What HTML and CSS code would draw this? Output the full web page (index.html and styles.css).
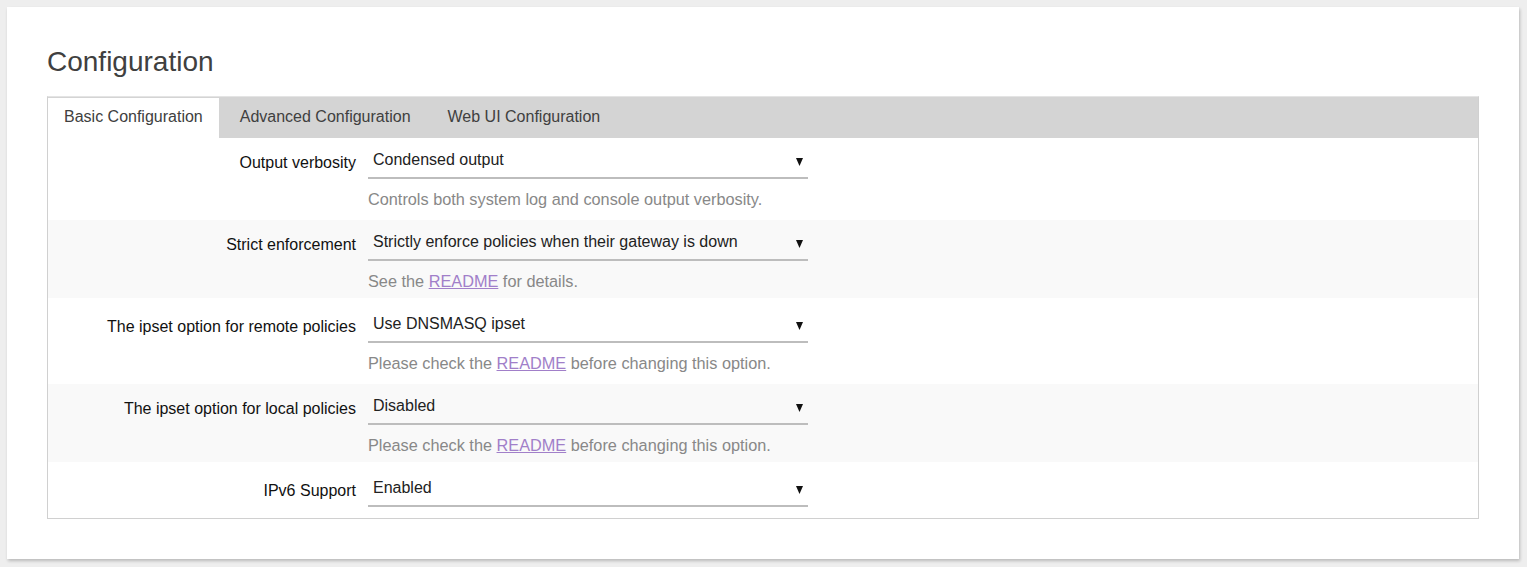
FILE: index.html
```html
<!DOCTYPE html>
<html lang="en">
<head>
<meta charset="utf-8">
<title>Configuration</title>
<link rel="stylesheet" href="styles.css">
</head>
<body>
<div class="page">
  <div class="card">
    <h2 class="title">Configuration</h2>
    <div class="section">
      <ul class="tabs">
        <li class="tab active">Basic Configuration</li>
        <li class="tab">Advanced Configuration</li>
        <li class="tab">Web UI Configuration</li>
      </ul>
      <div class="rows">
        <div class="row">
          <label class="label">Output verbosity</label>
          <div class="field">
            <div class="select"><span>Condensed output</span><svg class="arrow" width="7" height="8" viewBox="0 0 7 8"><polygon points="0,0 7,0 3.5,8" fill="#111"/></svg></div>
            <div class="desc">Controls both system log and console output verbosity.</div>
          </div>
        </div>
        <div class="row alt">
          <label class="label">Strict enforcement</label>
          <div class="field">
            <div class="select"><span>Strictly enforce policies when their gateway is down</span><svg class="arrow" width="7" height="8" viewBox="0 0 7 8"><polygon points="0,0 7,0 3.5,8" fill="#111"/></svg></div>
            <div class="desc">See the <a href="#">README</a> for details.</div>
          </div>
        </div>
        <div class="row">
          <label class="label">The ipset option for remote policies</label>
          <div class="field">
            <div class="select"><span>Use DNSMASQ ipset</span><svg class="arrow" width="7" height="8" viewBox="0 0 7 8"><polygon points="0,0 7,0 3.5,8" fill="#111"/></svg></div>
            <div class="desc">Please check the <a href="#">README</a> before changing this option.</div>
          </div>
        </div>
        <div class="row alt">
          <label class="label">The ipset option for local policies</label>
          <div class="field">
            <div class="select"><span>Disabled</span><svg class="arrow" width="7" height="8" viewBox="0 0 7 8"><polygon points="0,0 7,0 3.5,8" fill="#111"/></svg></div>
            <div class="desc">Please check the <a href="#">README</a> before changing this option.</div>
          </div>
        </div>
        <div class="row last">
          <label class="label">IPv6 Support</label>
          <div class="field">
            <div class="select"><span>Enabled</span><svg class="arrow" width="7" height="8" viewBox="0 0 7 8"><polygon points="0,0 7,0 3.5,8" fill="#111"/></svg></div>
          </div>
        </div>
      </div>
    </div>
  </div>
</div>
</body>
</html>
```
FILE: styles.css
```css
html, body {
  margin: 0;
  padding: 0;
  background: #eeeeee;
  font-family: "Liberation Sans", Arial, sans-serif;
}
.page {
  padding: 7px 8px 8px 7px;
}
.card {
  background: #fff;
  padding: 40px 40px 40px 40px;
  box-shadow: 1px 2px 3px rgba(0, 0, 0, 0.22);
}
.title {
  margin: 0 0 19px 0;
  font-size: 28px;
  line-height: 30px;
  font-weight: normal;
  color: #404040;
}
.section {
  border: 1px solid #d0d0d0;
  border-top: 1px solid #e4e4e4;
}
.tabs {
  list-style: none;
  margin: 0;
  padding: 1px 0 0 0;
  display: flex;
  background: #d4d4d4;
  height: 40px;
}
.tab {
  box-sizing: border-box;
  padding: 0 16px 2px 16px;
  margin-right: 5px;
  font-size: 16px;
  color: #404040;
  display: flex;
  align-items: center;
  height: 40px;
}
.tab.active {
  background: #fff;
}
.rows {
  display: flex;
  flex-direction: column;
  gap: 4px;
}
.row {
  display: grid;
  grid-template-columns: 308px 440px;
  column-gap: 12px;
  padding: 3px 0 7px 0;
}
.row.alt {
  background: #f9f9f9;
}
.row.last {
  padding-bottom: 11px;
}
.label {
  text-align: right;
  font-size: 16px;
  line-height: 20px;
  color: #111;
  padding-top: 12px;
}
.select {
  height: 36px;
  border-bottom: 2px solid #bdbdbd;
  display: flex;
  align-items: center;
  justify-content: space-between;
  padding: 0 5px 0 5px;
  font-size: 16px;
  color: #222;
}
.select span {
  position: relative;
  top: 1px;
}
.arrow {
  margin-right: 0;
  position: relative;
  top: 3px;
}
.desc {
  margin-top: 10px;
  font-size: 16.3px;
  line-height: 20px;
  color: #888;
}
.desc a {
  color: #a17fc9;
  text-decoration: underline;
}
```
